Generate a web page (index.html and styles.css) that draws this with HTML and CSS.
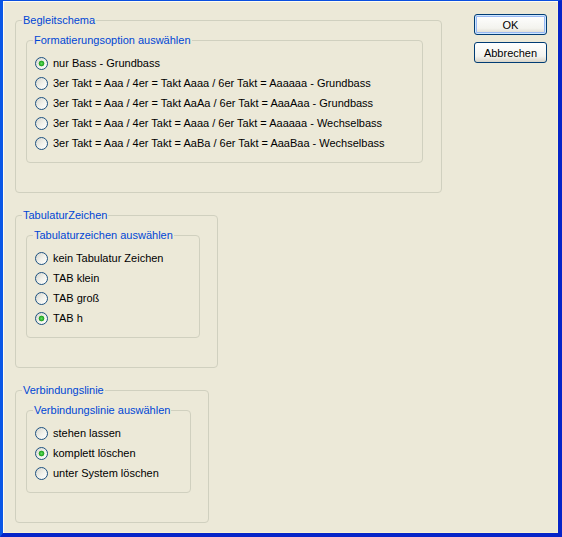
FILE: index.html
```html
<!DOCTYPE html>
<html lang="de">
<head>
  <meta charset="UTF-8">
  <meta name="viewport" content="width=device-width, initial-scale=1.0">
  <title>Begleitschema</title>
  <link rel="stylesheet" href="styles.css">
</head>
<body>
  <div class="dialog">
    <div class="groups">
      <fieldset class="group group-schema">
        <legend>Begleitschema</legend>
        <fieldset class="inner inner-schema">
          <legend>Formatierungsoption auswählen</legend>
          <label class="option"><input type="radio" name="schema" checked><span>nur Bass - Grundbass</span></label>
          <label class="option"><input type="radio" name="schema"><span>3er Takt = Aaa / 4er = Takt Aaaa / 6er Takt = Aaaaaa - Grundbass</span></label>
          <label class="option"><input type="radio" name="schema"><span>3er Takt = Aaa / 4er = Takt AaAa / 6er Takt = AaaAaa - Grundbass</span></label>
          <label class="option"><input type="radio" name="schema"><span>3er Takt = Aaa / 4er Takt = Aaaa / 6er Takt = Aaaaaa - Wechselbass</span></label>
          <label class="option"><input type="radio" name="schema"><span>3er Takt = Aaa / 4er Takt = AaBa / 6er Takt = AaaBaa - Wechselbass</span></label>
        </fieldset>
      </fieldset>

      <fieldset class="group group-tab">
        <legend>TabulaturZeichen</legend>
        <fieldset class="inner inner-tab">
          <legend>Tabulaturzeichen auswählen</legend>
          <label class="option"><input type="radio" name="tab"><span>kein Tabulatur Zeichen</span></label>
          <label class="option"><input type="radio" name="tab"><span>TAB klein</span></label>
          <label class="option"><input type="radio" name="tab"><span>TAB groß</span></label>
          <label class="option"><input type="radio" name="tab" checked><span>TAB h</span></label>
        </fieldset>
      </fieldset>

      <fieldset class="group group-line">
        <legend>Verbindungslinie</legend>
        <fieldset class="inner inner-line">
          <legend>Verbindungslinie auswählen</legend>
          <label class="option"><input type="radio" name="line"><span>stehen lassen</span></label>
          <label class="option"><input type="radio" name="line" checked><span>komplett löschen</span></label>
          <label class="option"><input type="radio" name="line"><span>unter System löschen</span></label>
        </fieldset>
      </fieldset>
    </div>

    <div class="buttons">
      <button class="btn btn-default">OK</button>
      <button class="btn">Abbrechen</button>
    </div>
  </div>
</body>
</html>
```

FILE: styles.css
```css
  body {
    margin: 0;
    background-color: #ece9d8;
    font-family: "Liberation Sans", Arial, sans-serif;
    font-size: 11px;
    color: #000;
  }
  .dialog {
    box-sizing: border-box;
    width: 562px;
    height: 537px;
    display: flex;
    padding: 13px 11px 0 12px;
    border-top: 1px solid #0a4fe0;
    border-left: 3px solid #0a57e6;
    border-right: 4px solid #0624c8;
    border-bottom: 4px solid #0624c8;
    box-shadow: inset 1px 1px 0 #fffdf2, inset -1px -1px 0 #f6f1d2;
  }
  .groups {
    display: flex;
    flex-direction: column;
    align-items: flex-start;
  }
  fieldset {
    box-sizing: border-box;
    margin: 0;
    border: 1px solid #d0d0bf;
    border-radius: 4px;
    min-width: 0;
  }
  legend {
    color: #0046d5;
    line-height: 13px;
    padding: 0 1px;
  }
  .group {
    padding: 7px 0 29px 10px;
  }
  .group > legend {
    margin-left: -4px;
  }
  .inner {
    padding: 6px 0 9px 8px;
  }
  .inner > legend {
    margin-left: -2px;
  }
  .group-schema { width: 427px; }
  .group-tab { width: 203px; margin-top: 16px; }
  .group-line { width: 194px; margin-top: 16px; }
  .inner-schema { width: 397px; }
  .inner-tab { width: 174px; }
  .inner-line { width: 165px; }

  .option {
    display: flex;
    align-items: center;
    height: 20px;
    white-space: nowrap;
  }
  .option input {
    appearance: none;
    -webkit-appearance: none;
    box-sizing: border-box;
    width: 13px;
    height: 13px;
    margin: 0 5px 0 0;
    border: 1px solid #1c5180;
    border-radius: 50%;
    background: linear-gradient(135deg, #d6d6ce 0%, #f2f2ec 55%, #ffffff 100%);
    flex: none;
  }
  .option input:checked {
    background:
      radial-gradient(circle at 50% 50%, #5ee05e 0, #21a121 2.5px, transparent 3.2px),
      linear-gradient(135deg, #d6d6ce 0%, #f2f2ec 55%, #ffffff 100%);
  }

  .buttons {
    margin-left: auto;
    display: flex;
    flex-direction: column;
    gap: 7px;
  }
  .btn {
    box-sizing: border-box;
    width: 73px;
    height: 21px;
    padding: 0;
    font-family: "Liberation Sans", Arial, sans-serif;
    font-size: 11px;
    color: #000;
    border: 1px solid #003c74;
    border-radius: 3px;
    background: linear-gradient(#ffffff, #f3f3ee 70%, #d8d4c8);
  }
  .btn-default {
    box-shadow: inset 0 0 0 1px #cee7ff, inset 0 0 0 2px #98b8f3;
  }
```
